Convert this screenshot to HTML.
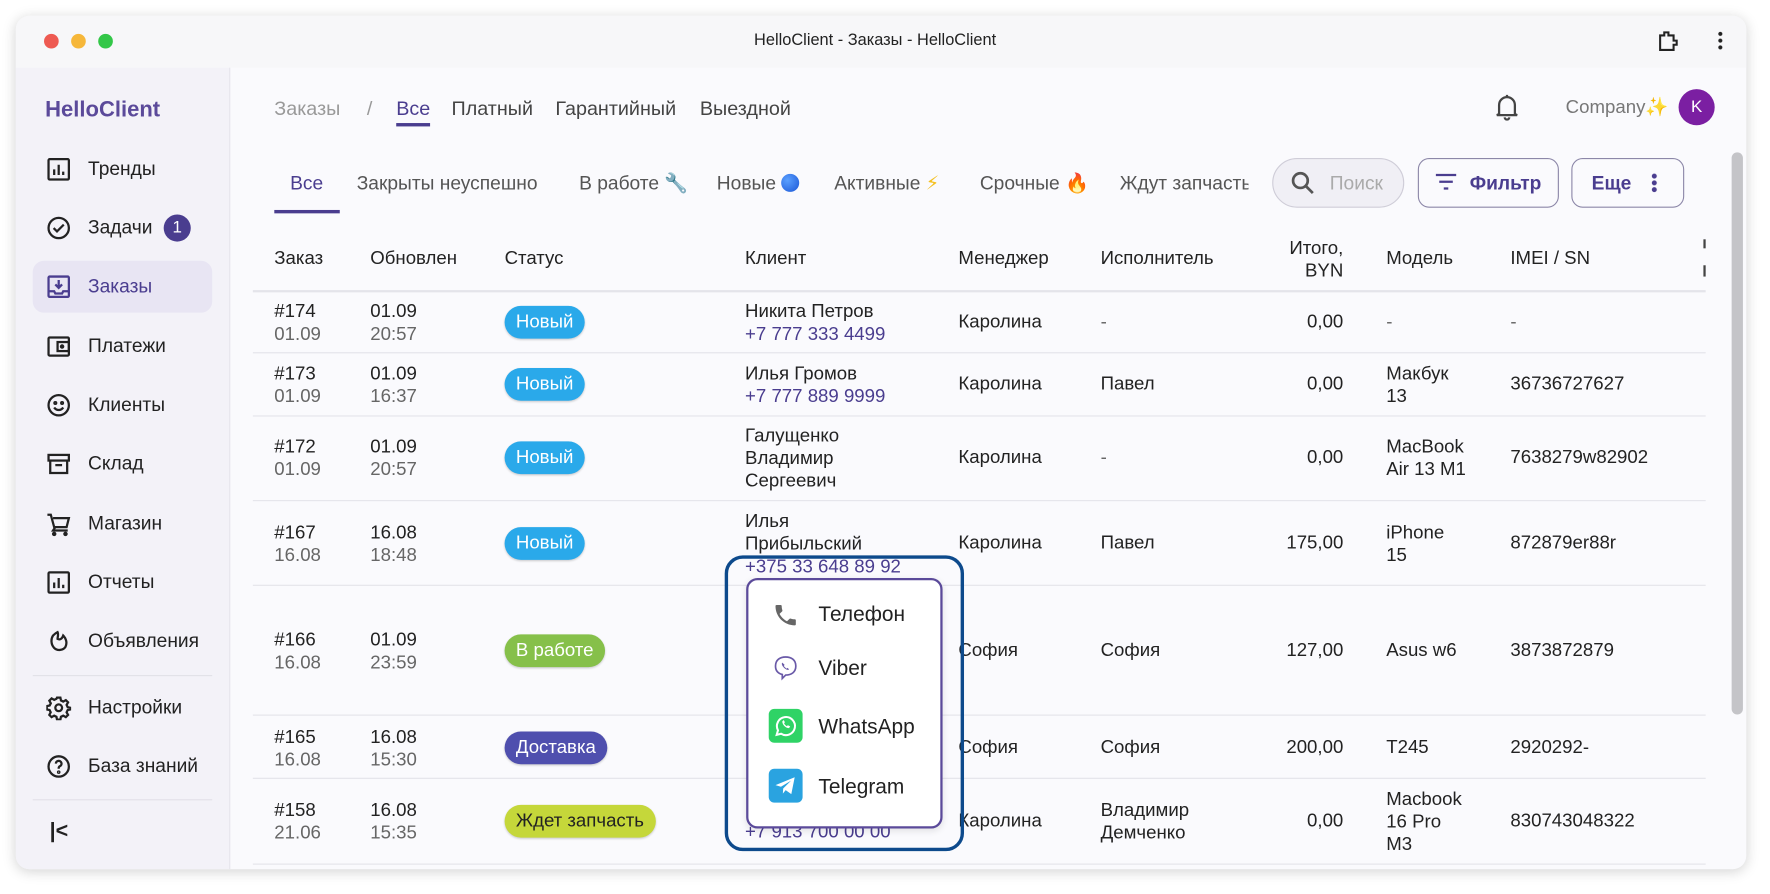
<!DOCTYPE html>
<html><head><meta charset="utf-8"><style>
*{margin:0;padding:0;box-sizing:border-box}
html,body{width:1770px;height:894px;overflow:hidden;background:#fff}
#s{position:absolute;left:0;top:0;width:1568px;height:792px;transform:scale(1.12883);transform-origin:0 0;font-family:"Liberation Sans","DejaVu Sans",sans-serif;color:#222}
.a{position:absolute;white-space:nowrap}
.win{position:absolute;left:14px;top:14px;width:1533px;height:756px;border-radius:12px;background:#fafafd;box-shadow:0 2px 12px rgba(0,0,0,.18);overflow:hidden}
.nav{font-size:17px;color:#222}
.ic{position:absolute;width:22px;height:22px}
.t{font-size:16.5px;color:#222}
.g{color:#666}
.p{color:#4a3d8f}
.hd{font-size:16.5px;color:#222}
.line{position:absolute;left:224px;width:1287px;height:1px;background:#e4e4ea}
.b{position:absolute;height:29px;border-radius:15px;color:#fff;font-size:16.5px;line-height:29px;padding:0 10px;box-shadow:0 1px 2px rgba(0,0,0,.2)}
</style></head><body><div id="s">
<div class="win">
 <div class="a" style="left:0;top:0;width:1533px;height:46px;background:#f7f7f9"></div>
 <div class="a" style="left:0;top:46px;width:190px;height:710px;background:#f3f2f8;border-right:1px solid #e6e5ec"></div>
</div>
<!-- traffic lights -->
<div class="a" style="left:39px;top:30px;width:13px;height:13px;border-radius:50%;background:#ee5a52"></div>
<div class="a" style="left:63px;top:30px;width:13px;height:13px;border-radius:50%;background:#f6b73a"></div>
<div class="a" style="left:87px;top:30px;width:13px;height:13px;border-radius:50%;background:#33c748"></div>
<div class="a" style="left:668px;top:28px;font-size:14.5px;color:#222">HelloClient - Заказы - HelloClient</div>
<svg class="a" style="left:1467px;top:25px" width="22" height="22" viewBox="0 0 24 24" fill="none" stroke="#222" stroke-width="2"><path d="M4 7h4V4h4v3h5v5h3v4h-3v5H4z"/></svg>
<div class="a" style="left:1522px;top:27px;width:4px;height:18px;background:radial-gradient(circle,#222 1.6px,transparent 2px) 0 0/4px 6px"></div>

<!-- sidebar -->
<div class="a" style="left:40px;top:86px;font-size:19.5px;font-weight:bold;color:#5b4a9a">HelloClient</div>
<div class="a" style="left:29px;top:231px;width:159px;height:46px;border-radius:10px;background:#e8e5f3"></div>
<div class="a" style="left:29px;top:598px;width:159px;height:1px;background:#e2e1e8"></div>
<div class="a" style="left:29px;top:708px;width:159px;height:1px;background:#e2e1e8"></div>
<svg class="a" style="left:41px;top:139px" width="22" height="22" viewBox="0 0 22 22" fill="none" stroke="#222" stroke-width="2"><rect x="2" y="2" width="18" height="18" rx="1"/><path d="M7 16v-5M11 16V7M15 16v-3"/></svg>
<div class="a nav" style="left:78px;top:140px">Тренды</div>
<svg class="a" style="left:41px;top:191px" width="22" height="22" viewBox="0 0 22 22" fill="none" stroke="#222" stroke-width="2"><circle cx="11" cy="11" r="9"/><path d="M6.5 11l3 3 6-6"/></svg>
<div class="a nav" style="left:78px;top:192px">Задачи</div>
<div class="a" style="left:145px;top:190px;width:24px;height:24px;border-radius:12px;background:#4a3d8f;color:#fff;font-size:15px;text-align:center;line-height:24px">1</div>
<svg class="a" style="left:41px;top:243px" width="22" height="22" viewBox="0 0 22 22" fill="none" stroke="#4a3d8f" stroke-width="2"><rect x="2" y="2" width="18" height="18" rx="1"/><path d="M11 5v7M8 9l3 3 3-3M2 15h5l1 2h6l1-2h5"/></svg>
<div class="a nav p" style="left:78px;top:244px">Заказы</div>
<svg class="a" style="left:41px;top:296px" width="22" height="22" viewBox="0 0 22 22" fill="none" stroke="#222" stroke-width="2"><rect x="2" y="3" width="18" height="16" rx="1"/><rect x="10" y="7" width="10" height="8"/><circle cx="14" cy="11" r="1"/></svg>
<div class="a nav" style="left:78px;top:297px">Платежи</div>
<svg class="a" style="left:41px;top:348px" width="22" height="22" viewBox="0 0 22 22" fill="none" stroke="#222" stroke-width="2"><circle cx="11" cy="11" r="9"/><path d="M7 13c2 3 6 3 8 0"/><circle cx="8" cy="9" r=".8"/><circle cx="14" cy="9" r=".8"/></svg>
<div class="a nav" style="left:78px;top:349px">Клиенты</div>
<svg class="a" style="left:41px;top:400px" width="22" height="22" viewBox="0 0 22 22" fill="none" stroke="#222" stroke-width="2"><rect x="2" y="3" width="18" height="5"/><path d="M3.5 8v11h15V8M8 12h6"/></svg>
<div class="a nav" style="left:78px;top:401px">Склад</div>
<svg class="a" style="left:41px;top:453px" width="22" height="22" viewBox="0 0 22 22" fill="none" stroke="#222" stroke-width="2"><path d="M1 3h3l3 11h11l2-8H6M8 14l-2 3h13"/><circle cx="7" cy="20" r="1"/><circle cx="17" cy="20" r="1"/></svg>
<div class="a nav" style="left:78px;top:454px">Магазин</div>
<svg class="a" style="left:41px;top:505px" width="22" height="22" viewBox="0 0 22 22" fill="none" stroke="#222" stroke-width="2"><rect x="2" y="2" width="18" height="18" rx="1"/><path d="M7 16v-5M11 16V7M15 16v-3"/></svg>
<div class="a nav" style="left:78px;top:506px">Отчеты</div>
<svg class="a" style="left:41px;top:557px" width="22" height="22" viewBox="0 0 22 22" fill="none" stroke="#222" stroke-width="2"><path d="M6 6c-2 3-2 8 1 11 3 3 8 2 10-1 2-4 0-8-2-10-1 3-3 4-5 3 0-2 1-4 0-6-2 1-3 2-4 3z"/></svg>
<div class="a nav" style="left:78px;top:558px">Объявления</div>
<svg class="a" style="left:41px;top:616px" width="22" height="22" viewBox="0 0 22 22" fill="none" stroke="#222" stroke-width="2"><circle cx="11" cy="11" r="3"/><path d="M9.5 2h3l.5 2.5 2 1 2.3-1.3 2 2-1.3 2.3 1 2L21.5 11v0l0 1.5-2.5.5-1 2 1.3 2.3-2 2-2.3-1.3-2 1-.5 2.5h-3l-.5-2.5-2-1-2.3 1.3-2-2L3.9 15l-1-2L.5 12.5v-3L3 9l1-2-1.3-2.3 2-2L7 4l2-1z"/></svg>
<div class="a nav" style="left:78px;top:617px">Настройки</div>
<svg class="a" style="left:41px;top:668px" width="22" height="22" viewBox="0 0 22 22" fill="none" stroke="#222" stroke-width="2"><circle cx="11" cy="11" r="9"/><path d="M8.5 8.5a2.5 2.5 0 1 1 3.5 2.3c-.7.4-1 1-1 1.7v.5"/><circle cx="11" cy="16" r=".6"/></svg>
<div class="a nav" style="left:78px;top:669px">База знаний</div>
<div class="a" style="left:44px;top:726px;font-size:19px;font-weight:bold;color:#222">|&lt;</div>

<!-- top breadcrumb -->
<div class="a" style="left:243px;top:86px;font-size:17.5px;color:#999">Заказы</div>
<div class="a" style="left:325px;top:86px;font-size:17.5px;color:#999">/</div>
<div class="a p" style="left:351px;top:86px;font-size:17.5px">Все</div>
<div class="a" style="left:351px;top:109px;width:30px;height:3px;background:#4a3d8f"></div>
<div class="a" style="left:400px;top:86px;font-size:17.5px;color:#444">Платный</div>
<div class="a" style="left:492px;top:86px;font-size:17.5px;color:#444">Гарантийный</div>
<div class="a" style="left:620px;top:86px;font-size:17.5px;color:#444">Выездной</div>
<svg class="a" style="left:1324px;top:83px" width="22" height="24" viewBox="0 0 22 24" fill="none" stroke="#444" stroke-width="2"><path d="M4 18V10a7 7 0 0 1 14 0v8l2 1H2zM11 1v2M9 21a2 2 0 0 0 4 0"/></svg>
<div class="a" style="left:1387px;top:86px;font-size:16.5px;color:#777">Company<span style="color:#f3d56b">✨</span></div>
<div class="a" style="left:1487px;top:79px;width:32px;height:32px;border-radius:50%;background:#7b1fa2;color:#fff;font-size:15px;text-align:center;line-height:32px">K</div>

<!-- tabs -->
<div class="a p" style="left:257px;top:153px;font-size:17px">Все</div>
<div class="a" style="left:243px;top:186px;width:58px;height:3px;background:#4a3d8f"></div>
<div class="a" style="left:316px;top:153px;font-size:17px;color:#555">Закрыты неуспешно</div>
<div class="a" style="left:513px;top:153px;font-size:17px;color:#555">В работе <span style="color:#888">🔧</span></div>
<div class="a" style="left:635px;top:153px;font-size:17px;color:#555">Новые <span style="display:inline-block;width:16px;height:16px;border-radius:50%;background:radial-gradient(circle at 35% 35%,#5aa0ff,#1a56d6);vertical-align:-2px"></span></div>
<div class="a" style="left:739px;top:153px;font-size:17px;color:#555">Активные <span style="color:#f4c020">⚡</span></div>
<div class="a" style="left:868px;top:153px;font-size:17px;color:#555">Срочные <span style="color:#f07020">🔥</span></div>
<div class="a" style="left:992px;top:153px;width:114px;overflow:hidden;font-size:17px;color:#555">Ждут запчасть</div>
<div class="a" style="left:1127px;top:140px;width:117px;height:44px;border-radius:22px;background:#f0eff5;border:1.5px solid #cfcdd8"></div>
<svg class="a" style="left:1143px;top:151px" width="22" height="22" viewBox="0 0 22 22" fill="none" stroke="#555" stroke-width="2.4"><circle cx="9" cy="9" r="6.5"/><path d="M14 14l6 6"/></svg>
<div class="a" style="left:1178px;top:153px;font-size:17px;color:#aaa">Поиск</div>
<div class="a" style="left:1256px;top:140px;width:125px;height:44px;border-radius:10px;border:1.5px solid #8c87a8;background:#fafafd"></div>
<svg class="a" style="left:1271px;top:153px" width="20" height="16" viewBox="0 0 20 16" stroke="#4a3d8f" stroke-width="2"><path d="M1 2h18M4 8h12M8 14h4"/></svg>
<div class="a p" style="left:1302px;top:153px;font-size:17px;font-weight:bold">Фильтр</div>
<div class="a" style="left:1392px;top:140px;width:100px;height:44px;border-radius:10px;border:1.5px solid #8c87a8;background:#fafafd"></div>
<div class="a p" style="left:1410px;top:153px;font-size:17px;font-weight:bold">Еще</div>
<div class="a" style="left:1463px;top:153px;width:5px;height:18px;background:radial-gradient(circle,#4a3d8f 2px,transparent 2.4px) 0 0/5px 6px"></div>

<!-- scrollbar -->
<div class="a" style="left:1534px;top:135px;width:10px;height:498px;border-radius:5px;background:#c4c4c8"></div>

<!-- header -->
<div class="a hd" style="left:243px;top:220px">Заказ</div>
<div class="a hd" style="left:328px;top:220px">Обновлен</div>
<div class="a hd" style="left:447px;top:220px">Статус</div>
<div class="a hd" style="left:660px;top:220px">Клиент</div>
<div class="a hd" style="left:849px;top:220px">Менеджер</div>
<div class="a hd" style="left:975px;top:220px">Исполнитель</div>
<div class="a hd" style="left:1120px;top:210px;width:70px;text-align:right;line-height:20px">Итого,<br>BYN</div>
<div class="a hd" style="left:1228px;top:220px">Модель</div>
<div class="a hd" style="left:1338px;top:220px">IMEI / SN</div>
<div class="a" style="left:1509px;top:212px;width:2px;height:8px;background:#444"></div>
<div class="a" style="left:1509px;top:235px;width:2px;height:10px;background:#444"></div>
<div class="line" style="top:257px;height:2px"></div>
<div class="line" style="top:312px"></div>
<div class="line" style="top:368px"></div>
<div class="line" style="top:443px"></div>
<div class="line" style="top:518px"></div>
<div class="line" style="top:633px"></div>
<div class="line" style="top:689px"></div>
<div class="line" style="top:765px"></div>

<!-- rows -->
<div class="a t" style="left:243px;top:266px;line-height:20px">#174<br><span class="g">01.09</span></div>
<div class="a t" style="left:328px;top:266px;line-height:20px">01.09<br><span class="g">20:57</span></div>
<div class="b" style="left:447px;top:271px;background:#2aa9ea">Новый</div>
<div class="a t" style="left:660px;top:266px;line-height:20px">Никита Петров<br><span class="p">+7 777 333 4499</span></div>
<div class="a t" style="left:849px;top:276px">Каролина</div>
<div class="a t g" style="left:975px;top:276px">-</div>
<div class="a t" style="left:1120px;top:276px;width:70px;text-align:right">0,00</div>
<div class="a t g" style="left:1228px;top:276px">-</div>
<div class="a t g" style="left:1338px;top:276px">-</div>

<div class="a t" style="left:243px;top:321px;line-height:20px">#173<br><span class="g">01.09</span></div>
<div class="a t" style="left:328px;top:321px;line-height:20px">01.09<br><span class="g">16:37</span></div>
<div class="b" style="left:447px;top:326px;background:#2aa9ea">Новый</div>
<div class="a t" style="left:660px;top:321px;line-height:20px">Илья Громов<br><span class="p">+7 777 889 9999</span></div>
<div class="a t" style="left:849px;top:331px">Каролина</div>
<div class="a t" style="left:975px;top:331px">Павел</div>
<div class="a t" style="left:1120px;top:331px;width:70px;text-align:right">0,00</div>
<div class="a t" style="left:1228px;top:321px;line-height:20px">Макбук<br>13</div>
<div class="a t" style="left:1338px;top:331px">36736727627</div>

<div class="a t" style="left:243px;top:386px;line-height:20px">#172<br><span class="g">01.09</span></div>
<div class="a t" style="left:328px;top:386px;line-height:20px">01.09<br><span class="g">20:57</span></div>
<div class="b" style="left:447px;top:391px;background:#2aa9ea">Новый</div>
<div class="a t" style="left:660px;top:376px;line-height:20px">Галущенко<br>Владимир<br>Сергеевич</div>
<div class="a t" style="left:849px;top:396px">Каролина</div>
<div class="a t g" style="left:975px;top:396px">-</div>
<div class="a t" style="left:1120px;top:396px;width:70px;text-align:right">0,00</div>
<div class="a t" style="left:1228px;top:386px;line-height:20px">MacBook<br>Air 13 M1</div>
<div class="a t" style="left:1338px;top:396px">7638279w82902</div>

<div class="a t" style="left:243px;top:462px;line-height:20px">#167<br><span class="g">16.08</span></div>
<div class="a t" style="left:328px;top:462px;line-height:20px">16.08<br><span class="g">18:48</span></div>
<div class="b" style="left:447px;top:467px;background:#2aa9ea">Новый</div>
<div class="a t" style="left:660px;top:452px;line-height:20px">Илья<br>Прибыльский<br><span class="p">+375 33 648 89 92</span></div>
<div class="a t" style="left:849px;top:472px">Каролина</div>
<div class="a t" style="left:975px;top:472px">Павел</div>
<div class="a t" style="left:1120px;top:472px;width:70px;text-align:right">175,00</div>
<div class="a t" style="left:1228px;top:462px;line-height:20px">iPhone<br>15</div>
<div class="a t" style="left:1338px;top:472px">872879er88r</div>

<div class="a t" style="left:243px;top:557px;line-height:20px">#166<br><span class="g">16.08</span></div>
<div class="a t" style="left:328px;top:557px;line-height:20px">01.09<br><span class="g">23:59</span></div>
<div class="b" style="left:447px;top:562px;background:#86c04a">В работе</div>
<div class="a t" style="left:849px;top:567px">София</div>
<div class="a t" style="left:975px;top:567px">София</div>
<div class="a t" style="left:1120px;top:567px;width:70px;text-align:right">127,00</div>
<div class="a t" style="left:1228px;top:567px">Asus w6</div>
<div class="a t" style="left:1338px;top:567px">3873872879</div>

<div class="a t" style="left:243px;top:643px;line-height:20px">#165<br><span class="g">16.08</span></div>
<div class="a t" style="left:328px;top:643px;line-height:20px">16.08<br><span class="g">15:30</span></div>
<div class="b" style="left:447px;top:648px;background:#4f4fae">Доставка</div>
<div class="a t" style="left:849px;top:653px">София</div>
<div class="a t" style="left:975px;top:653px">София</div>
<div class="a t" style="left:1120px;top:653px;width:70px;text-align:right">200,00</div>
<div class="a t" style="left:1228px;top:653px">T245</div>
<div class="a t" style="left:1338px;top:653px">2920292-</div>

<div class="a t" style="left:243px;top:708px;line-height:20px">#158<br><span class="g">21.06</span></div>
<div class="a t" style="left:328px;top:708px;line-height:20px">16.08<br><span class="g">15:35</span></div>
<div class="b" style="left:447px;top:713px;background:#c5d73a;color:#222">Ждет запчасть</div>
<div class="a t p" style="left:660px;top:728px">+7 913 700 00 00</div>
<div class="a t" style="left:849px;top:718px">Каролина</div>
<div class="a t" style="left:975px;top:708px;line-height:20px">Владимир<br>Демченко</div>
<div class="a t" style="left:1120px;top:718px;width:70px;text-align:right">0,00</div>
<div class="a t" style="left:1228px;top:698px;line-height:20px">Macbook<br>16 Pro<br>M3</div>
<div class="a t" style="left:1338px;top:718px">830743048322</div>

<!-- popup -->
<div class="a" style="left:642px;top:492px;width:212px;height:262px;border:3px solid #0d4a8c;border-radius:16px"></div>
<div class="a" style="left:661px;top:512px;width:174px;height:222px;border:2px solid #5b4a9a;border-radius:10px;background:#fff;box-shadow:0 2px 6px rgba(0,0,0,.1)"></div>
<svg class="a" style="left:684px;top:533px" width="24" height="24" viewBox="0 0 24 24"><path fill="#666" d="M6.6 10.8c1.4 2.8 3.8 5.1 6.6 6.6l2.2-2.2c.3-.3.7-.4 1-.2 1.1.4 2.3.6 3.6.6.6 0 1 .4 1 1V20c0 .6-.4 1-1 1C10.6 21 3 13.4 3 4c0-.6.4-1 1-1h3.5c.6 0 1 .4 1 1 0 1.3.2 2.5.6 3.6.1.3 0 .7-.2 1z"/></svg>
<div class="a" style="left:725px;top:533px;font-size:18.5px;color:#222">Телефон</div>
<svg class="a" style="left:684px;top:580px" width="24" height="24" viewBox="0 0 24 24" fill="none" stroke="#6a5aa8" stroke-width="1.5"><path d="M12 2c5 0 9 2.5 9 8s-4 8-9 8l-3 3v-3.5C5 16.5 3 14 3 10c0-5.5 4-8 9-8z"/><path d="M9 7c-1 1 0 3 1.5 4.5S14 14 15 13l-1.2-1.3-1.2.6-2.2-2.2.6-1.2z" fill="#6a5aa8" stroke="none"/></svg>
<div class="a" style="left:725px;top:581px;font-size:18.5px;color:#222">Viber</div>
<div class="a" style="left:681px;top:628px;width:30px;height:30px;border-radius:5px;background:#2fd366"></div>
<svg class="a" style="left:684px;top:631px" width="24" height="24" viewBox="0 0 24 24" fill="none" stroke="#fff" stroke-width="1.8"><path d="M4 20l1.2-4A8 8 0 1 1 8 19z"/><path d="M9 8c0 3 3 6 6 6l1-1.5-2-1-1 .7c-1-.5-2-1.5-2.4-2.4l.7-1-1-2z" fill="#fff" stroke="none"/></svg>
<div class="a" style="left:725px;top:633px;font-size:18.5px;color:#222">WhatsApp</div>
<div class="a" style="left:681px;top:681px;width:30px;height:30px;border-radius:5px;background:#2aa3e0"></div>
<svg class="a" style="left:684px;top:684px" width="24" height="24" viewBox="0 0 24 24"><path fill="#fff" d="M3 11.5l17-7-3 15-5-3.5-2.5 3 .3-4.5 7-7-9 5.5z"/></svg>
<div class="a" style="left:725px;top:686px;font-size:18.5px;color:#222">Telegram</div>
</div></body></html>
